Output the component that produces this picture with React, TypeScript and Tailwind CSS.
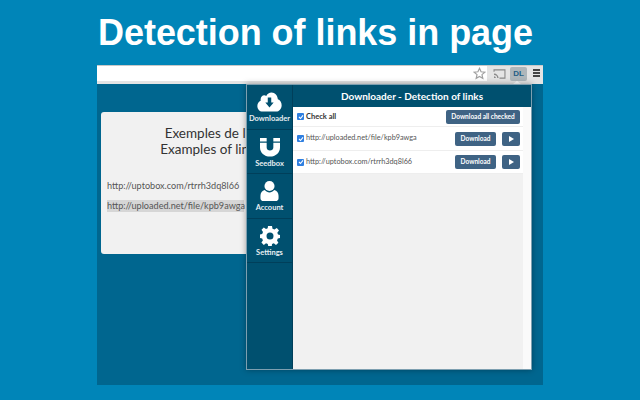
import React from "react";

const Arial = "font-['Liberation_Sans',Arial,sans-serif]";
const Lato = "font-['Lato','Open_Sans',sans-serif]";

function CloudIcon() {
  return (
    <svg width="25" height="20" viewBox="0 0 36 25" preserveAspectRatio="none">
      <path
        fill="#fff"
        d="M8 24.500C3.600 24.500 0.500 21.300 0.500 17.500C0.500 14.300 2.500 11.700 5.300 10.800C5.200 10.300 5.200 9.900 5.200 9.500C5.200 6.500 7.600 4.200 10.500 4.200C11.500 4.200 12.500 4.500 13.300 5C14.800 2.200 17.700 0.500 21 0.500C25.900 0.500 29.800 4.300 30 9.100C33.300 10.100 35.500 13 35.500 16.500C35.500 20.900 32 24.500 27.500 24.500Z"
      />
      <path fill="#00506f" d="M15.500 7H20.500V13H24L18 19.500L12 13H15.500Z" />
    </svg>
  );
}

function MagnetIcon() {
  return (
    <svg width="20" height="19" viewBox="0 0 21 22" preserveAspectRatio="none">
      <path
        fill="#fff"
        d="M0 0H7V4H0ZM14 0H21V4H14ZM0 5.500H7V11C7 13 8.500 14.500 10.500 14.500C12.500 14.500 14 13 14 11V5.500H21V11C21 17 16.500 21.500 10.500 21.500C4.500 21.500 0 17 0 11Z"
      />
    </svg>
  );
}

function UserIcon() {
  return (
    <svg width="19" height="20" viewBox="0 0 19 21">
      <circle cx="9.500" cy="5.300" r="5.300" fill="#fff" />
      <path
        fill="#fff"
        d="M4.500 9.500C6 11.200 7.600 12 9.500 12C11.400 12 13 11.200 14.500 9.500C17.300 10 19 12.500 19 15.500V18C19 19.700 17.700 21 16 21H3C1.300 21 0 19.700 0 18V15.500C0 12.500 1.700 10 4.500 9.500Z"
      />
    </svg>
  );
}

function GearIcon() {
  return (
    <svg width="20" height="20" viewBox="0 0 20 20">
      <path
        fill="#fff"
        fillRule="evenodd"
        d="M8 0H12L12.500 2.800L14.400 3.600L16.800 2L19 4.600L17.300 6.700L18 8.500L20 9V12L17.800 12.600L17 14.400L18.400 16.800L16 19L13.800 17.300L12 18L11.800 20H8.200L7.800 18L6 17.300L3.800 19L1.400 16.600L2.900 14.400L2.200 12.500L0 12V8.500L2.200 8L3 6L1.500 3.800L3.800 1.500L6 3L7.700 2.300ZM10 6.500A3.500 3.500 0 1 0 10 13.500A3.500 3.500 0 1 0 10 6.500Z"
      />
    </svg>
  );
}

function SideItem({ icon, label, h }: { icon: React.ReactNode; label: string; h: string }) {
  return (
    <div className={`${h} flex flex-col items-center border-b border-[#003f5a] pt-[7px]`}>
      <div className="flex h-[20px] items-center justify-center">{icon}</div>
      <div className="mt-[2px] text-[7.500px] leading-[10px] font-bold text-[#e8eef2]">{label}</div>
    </div>
  );
}

function Check() {
  return (
    <span className="flex h-[7px] w-[7px] shrink-0 items-center justify-center rounded-[1px] bg-[#2f7fe0]">
      <svg width="6" height="6" viewBox="0 0 6 6">
        <path d="M1 3L2.500 4.500L5 1.300" fill="none" stroke="#fff" strokeWidth="1.100" />
      </svg>
    </span>
  );
}

function Btn({ children, w }: { children: React.ReactNode; w: string }) {
  return (
    <div className={`${w} flex h-[14px] items-center justify-center rounded-[2px] bg-[#3f6384] text-[6.500px] font-bold text-white`}>
      {children}
    </div>
  );
}

function LinkRow({ url, h }: { url: string; h: string }) {
  return (
    <div className={`${h} flex items-center border-b border-[#eeeeee] bg-white pr-[3px] pl-[4px]`}>
      <Check />
      <span className="ml-[2px] flex-1 text-[7.300px] text-[#555]">{url}</span>
      <Btn w="w-[41px]">Download</Btn>
      <div className="ml-[6px]">
        <Btn w="w-[18px]">
          <span className="h-0 w-0 border-y-[3px] border-l-[5px] border-y-transparent border-l-white" />
        </Btn>
      </div>
    </div>
  );
}

export default function App() {
  return (
    <div className={`flex h-[400px] w-[640px] flex-col items-center overflow-hidden bg-[#0085b8] ${Arial}`}>
      <h1 className="mt-[12px] h-[53px] w-[446px] pl-[1px] text-[36px] leading-[41px] font-bold tracking-[-0.04px] text-white">
        Detection of links in page
      </h1>

      <div className="relative flex h-[320px] w-[446px] flex-col bg-[#00668f]">
        {/* browser toolbar */}
        <div className="flex h-[19px] items-start border-t border-[#c8c8c8] bg-[#e4e4e4]">
          <div className="flex h-[15px] w-[390px] items-center justify-end bg-white pr-[1px]">
            <svg width="13" height="13" viewBox="0 0 24 24">
              <path
                fill="none"
                stroke="#a0a0a0"
                strokeWidth="2.200"
                d="M12 2.500L14.900 8.800L21.800 9.500L16.600 14.100L18.100 21L12 17.400L5.900 21L7.400 14.100L2.200 9.500L9.100 8.800Z"
              />
            </svg>
          </div>
          <svg className="mt-[3px] ml-[6px]" width="13" height="10" viewBox="0 0 14 11">
            <path fill="none" stroke="#888" strokeWidth="1.200" d="M1 3V1H13V10H7" />
            <path fill="#888" d="M1 5A5 5 0 0 1 6 10H4.500A3.500 3.500 0 0 0 1 6.500ZM1 8A2 2 0 0 1 3 10H1Z" />
          </svg>
          <div className="mt-[1px] ml-[4px] flex h-[14px] w-[17px] items-center justify-center rounded-[2px] bg-[#aeb6ba] text-[8px] font-bold text-[#1f5f85]">
            DL
          </div>
          <div className="mt-[3px] ml-[6px] flex w-[7px] flex-col gap-[1px]">
            <span className="h-[2px] bg-[#444]" />
            <span className="h-[2px] bg-[#444]" />
            <span className="h-[2px] bg-[#444]" />
          </div>
        </div>

        {/* page behind the popup */}
        <div className={`mt-[28px] ml-[4px] h-[142px] w-[180px] overflow-hidden rounded-[3px] bg-[#f1f1f1] ${Lato}`}>
          <div className="mt-[13px] w-[220px] text-center text-[13.500px] leading-[16px] whitespace-nowrap text-[#333]">
            <div className="pl-[12px]">Exemples de liens</div>
            <div>Examples of links</div>
          </div>
          <div className="mt-[23px] ml-[6px] text-[9.100px] leading-[12px] whitespace-nowrap text-[#555]">
            http://uptobox.com/rtrrh3dq8l66
          </div>
          <div className="mt-[8px] ml-[6px] w-[137px] bg-[#d6d6d6] text-[9.100px] leading-[12px] whitespace-nowrap text-[#555]">
            http://uploaded.net/file/kpb9awga
          </div>
        </div>

        {/* little arrow under the DL button */}
        <div className="absolute top-[16px] left-[416px] h-0 w-0 border-x-[4px] border-b-[3px] border-x-transparent border-b-white" />

        {/* extension popup */}
        <div className={`absolute top-[19px] left-[149px] flex h-[286px] w-[286px] border border-[#7d9fb0] bg-[#f1f1f1] shadow-[0_0_6px_rgba(0,0,0,0.35)] ${Lato}`}>
          <div className="w-[46px] shrink-0 border-r border-[#003f5a] bg-[#00506f]">
            <SideItem icon={<CloudIcon />} label="Downloader" h="h-[45px]" />
            <SideItem icon={<MagnetIcon />} label="Seedbox" h="h-[44px]" />
            <SideItem icon={<UserIcon />} label="Account" h="h-[45px]" />
            <SideItem icon={<GearIcon />} label="Settings" h="h-[44px]" />
          </div>
          <div className="flex min-w-0 flex-1 flex-col">
            <div className="flex h-[22px] items-center justify-center bg-[#00506f] text-[10px] font-bold text-white">
              Downloader - Detection of links
            </div>
            <div className="flex flex-1">
              <div className="min-w-0 flex-1">
                <div className="flex h-[20px] items-center border-b border-[#eeeeee] bg-white pr-[3px] pl-[4px]">
                  <Check />
                  <span className="ml-[2px] flex-1 text-[7.500px] font-bold text-[#333]">Check all</span>
                  <Btn w="w-[74px]">Download all checked</Btn>
                </div>
                <LinkRow url="http://uploaded.net/file/kpb9awga" h="h-[24px]" />
                <LinkRow url="http://uptobox.com/rtrrh3dq8l66" h="h-[23px]" />
              </div>
              <div className="w-[8px] shrink-0 bg-[#fafafa]" />
            </div>
          </div>
        </div>
      </div>
    </div>
  );
}
